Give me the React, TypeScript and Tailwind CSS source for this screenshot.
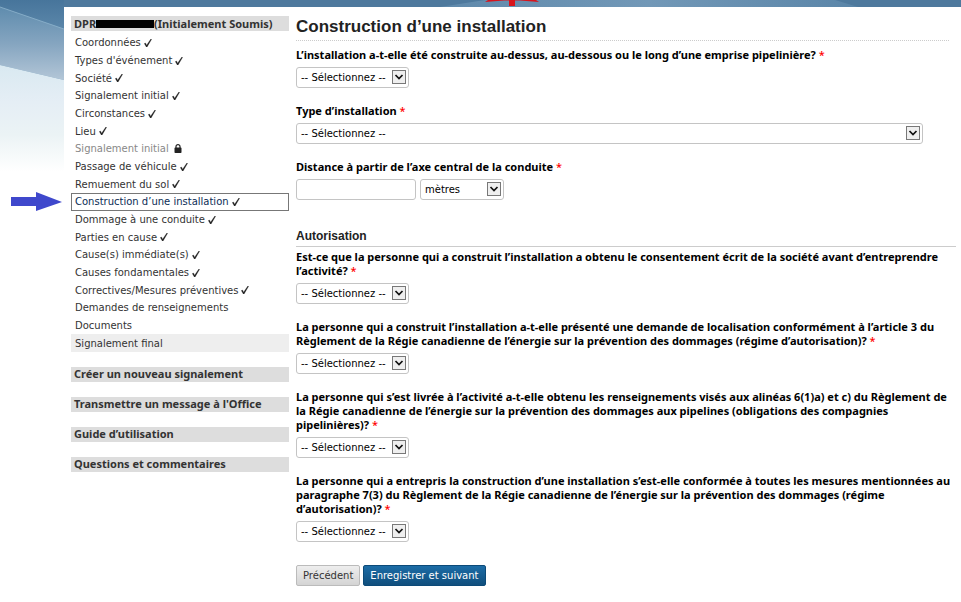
import React from "react";

const steps = [
  { label: "Coordonnées", mark: "check" },
  { label: "Types d'événement", mark: "check" },
  { label: "Société", mark: "check" },
  { label: "Signalement initial", mark: "check" },
  { label: "Circonstances", mark: "check" },
  { label: "Lieu", mark: "check" },
  { label: "Signalement initial", mark: "lock" },
  { label: "Passage de véhicule", mark: "check" },
  { label: "Remuement du sol", mark: "check" },
  { label: "Construction d’une installation", mark: "check", current: true },
  { label: "Dommage à une conduite", mark: "check" },
  { label: "Parties en cause", mark: "check" },
  { label: "Cause(s) immédiate(s)", mark: "check" },
  { label: "Causes fondamentales", mark: "check" },
  { label: "Correctives/Mesures préventives", mark: "check" },
  { label: "Demandes de renseignements", mark: "" },
  { label: "Documents", mark: "" },
  { label: "Signalement final", mark: "", shaded: true },
];

const sections = [
  "Créer un nouveau signalement",
  "Transmettre un message à l'Office",
  "Guide d’utilisation",
  "Questions et commentaires",
];

function Check() {
  return (
    <svg viewBox="0 0 8 8" className="ml-[3px] size-2 shrink-0" aria-hidden="true">
      <path d="M0.3 4.6L1.5 4L2.6 6.2L6.8 0.1L7.6 0.3L3.1 7.9H2.3Z" fill="#222" stroke="#222" strokeWidth="0.3" />
    </svg>
  );
}

function Lock() {
  return (
    <svg viewBox="0 0 8 9" className="ml-[5px] h-[9px] w-2 shrink-0" aria-hidden="true">
      <path d="M2 4V2.6a2 2 0 0 1 4 0V4" fill="none" stroke="#222" strokeWidth="1.2" />
      <rect x="0.5" y="3.6" width="7" height="5.4" rx="0.8" fill="#222" />
    </svg>
  );
}

function Select({ id, width, options, label }: { id: string; width: string; options: string[]; label?: string }) {
  return (
    <div className={`relative ${width}`}>
      <select
        id={id}
        aria-label={label}
        className="block h-[21px] w-full appearance-none rounded-[3px] border border-[#c4c4c4] bg-white pl-1 leading-[14px] text-black"
      >
        {options.map((o) => (
          <option key={o}>{o}</option>
        ))}
      </select>
      <svg viewBox="0 0 14 14" className="pointer-events-none absolute right-[3px] top-[3px] size-[14px]" aria-hidden="true">
        <rect x="0.5" y="0.5" width="13" height="13" fill="#efefef" stroke="#787878" />
        <path d="M3.5 5L7 8.6L10.5 5" fill="none" stroke="#111" strokeWidth="1.7" />
      </svg>
    </div>
  );
}

function Label({ htmlFor, children }: { htmlFor: string; children: React.ReactNode }) {
  return (
    <label
      htmlFor={htmlFor}
      className="mb-[5px] block font-['Noto_Sans',Verdana,sans-serif] text-[11px] font-bold leading-[14px] text-black"
    >
      {children} <span className="font-medium text-[#f00]">*</span>
    </label>
  );
}

const choose = ["-- Sélectionnez --"];

const authorisations = [
  "Est-ce que la personne qui a construit l’installation a obtenu le consentement écrit de la société avant d’entreprendre l’activité?",
  "La personne qui a construit l’installation a-t-elle présenté une demande de localisation conformément à l’article 3 du Règlement de la Régie canadienne de l’énergie sur la prévention des dommages (régime d’autorisation)?",
  "La personne qui s’est livrée à l’activité a-t-elle obtenu les renseignements visés aux alinéas 6(1)a) et c) du Règlement de la Régie canadienne de l’énergie sur la prévention des dommages aux pipelines (obligations des compagnies pipelinières)?",
  "La personne qui a entrepris la construction d’une installation s’est-elle conformée à toutes les mesures mentionnées au paragraphe 7(3) du Règlement de la Régie canadienne de l’énergie sur la prévention des dommages (régime d’autorisation)?",
];

function Backdrop() {
  return (
    <>
      <svg viewBox="0 0 64 172" preserveAspectRatio="none" className="absolute left-0 top-0 h-[172px] w-16" aria-hidden="true">
        <defs>
          <linearGradient id="sky" x1="0" y1="0" x2="0" y2="1">
            <stop offset="0" stopColor="#47759b" />
            <stop offset="0.2" stopColor="#5f8aad" />
          </linearGradient>
          <linearGradient id="beam" x1="0" y1="0" x2="0" y2="1">
            <stop offset="0" stopColor="#5f8cae" />
            <stop offset="0.5" stopColor="#85a5c0" />
            <stop offset="1" stopColor="#b3c6d7" />
          </linearGradient>
          <linearGradient id="snow" x1="0" y1="0" x2="0" y2="1">
            <stop offset="0" stopColor="#d9e9f1" />
            <stop offset="0.35" stopColor="#e5eef5" />
            <stop offset="0.65" stopColor="#ebf3f5" />
            <stop offset="1" stopColor="#ffffff" />
          </linearGradient>
        </defs>
        <rect width="64" height="172" fill="url(#sky)" />
        <path d="M0 7L64 29V80L0 65Z" fill="url(#beam)" />
        <path d="M0 7L64 29" stroke="#8fb5ce" strokeWidth="0.8" />
        <path d="M0 65L64 80V172H0Z" fill="url(#snow)" />
      </svg>
      <svg viewBox="430 0 430 7" className="absolute left-[430px] top-0 h-[7px] w-[430px]" aria-hidden="true">
        <defs>
          <linearGradient id="glow" x1="0" y1="0" x2="1" y2="0">
            <stop offset="0" stopColor="#5f89ab" />
            <stop offset="0.5" stopColor="#7298b7" />
            <stop offset="1" stopColor="#5a85a8" />
          </linearGradient>
        </defs>
        <path d="M440 7L485 0H835L858 7Z" fill="url(#glow)" />
        <path d="M488 0H536L539 2L520 0.6H515V6H509V0.6H504L485 2Z" fill="#d8141c" />
      </svg>
    </>
  );
}

export default function App() {
  return (
    <div className="relative min-h-screen bg-white font-['DejaVu_Sans',Verdana,sans-serif] text-[10px] text-[#333]">
      <div className="h-[7px] bg-[#4e799d]" />
      <Backdrop />
      <svg viewBox="0 0 51 20" className="absolute left-[11px] top-[192px] h-5 w-[51px]" aria-hidden="true">
        <path d="M0 5H25V0L51 10L25 19V14H0Z" fill="#3f48cc" />
      </svg>

      <div className="relative ml-16 flex bg-white pl-[7px]">
        <nav className="w-[218px] shrink-0 pt-[9px]">
          <h2 className="flex h-[15px] items-center bg-[#ddd] pl-[3px] font-['Noto_Sans',Verdana,sans-serif] text-[11px] font-bold leading-[15px]">
            DPR
            <span className="h-2 w-[58px] bg-black" />
            (Initialement Soumis)
          </h2>
          <ul className="mt-[3px] flex h-[318px] flex-col">
            {steps.map((s, i) => (
              <li key={i} className="flex flex-1">
                <a
                  href="#"
                  aria-current={s.current ? "page" : undefined}
                  className={`flex w-full items-center border pl-[3px] leading-[15px] ${
                    s.current ? "border-[#777] text-[#0b2d55]" : s.shaded ? "border-[#eee] bg-[#eee]" : "border-transparent"
                  } ${s.mark === "lock" ? "text-[#888]" : ""}`}
                >
                  {s.label}
                  {s.mark === "check" && <Check />}
                  {s.mark === "lock" && <Lock />}
                </a>
              </li>
            ))}
          </ul>
          <ul className="mt-[15px] flex flex-col gap-[15px] font-['Noto_Sans',Verdana,sans-serif] text-[11px]">
            {sections.map((s) => (
              <li key={s}>
                <a href="#" className="block h-[15px] bg-[#ddd] pl-[3px] font-bold leading-[14px]">
                  {s}
                </a>
              </li>
            ))}
          </ul>
        </nav>

        <main className="ml-[7px] min-w-0 flex-1 pb-4 pr-[5px] pt-[10px]">
          <h1 className="mr-[7px] border-b border-dotted border-[#ccc] pb-[3px] font-['Liberation_Sans',Arial,sans-serif] text-[17px] font-bold leading-5 text-[#222]">
            Construction d’une installation
          </h1>
          <form onSubmit={(e) => e.preventDefault()}>
            <div className="mt-[7px]">
              <Label htmlFor="emprise">
                L’installation a-t-elle été construite au-dessus, au-dessous ou le long d’une emprise pipelinière?
              </Label>
              <Select id="emprise" width="w-[113px]" options={choose} />
            </div>
            <div className="mt-4">
              <Label htmlFor="type">Type d’installation</Label>
              <Select id="type" width="mr-[33px]" options={choose} />
            </div>
            <div className="mt-4">
              <Label htmlFor="distance">Distance à partir de l’axe central de la conduite</Label>
              <div className="flex gap-1">
                <input id="distance" type="text" className="h-[21px] w-[120px] rounded-[3px] border border-[#c4c4c4] px-[5px]" />
                <Select id="unite" label="Unité" width="w-[84px]" options={["mètres", "kilomètres"]} />
              </div>
            </div>

            <h2 className="mt-7 border-b border-[#ccc] pb-[2px] font-['Liberation_Sans',Arial,sans-serif] text-[12px] font-bold leading-4 text-[#222]">
              Autorisation
            </h2>
            <div className="mt-[3px] flex flex-col gap-4">
              {authorisations.map((q, i) => (
                <div key={i}>
                  <Label htmlFor={`autorisation-${i}`}>{q}</Label>
                  <Select id={`autorisation-${i}`} width="w-[113px]" options={choose} />
                </div>
              ))}
            </div>

            <div className="mt-[23px] flex gap-[3px]">
              <button
                type="button"
                className="h-[21px] rounded-[2px] border border-[#bbb] bg-linear-to-b from-[#eee] to-[#d4d4d4] px-[6px] leading-4 text-[#333]"
              >
                Précédent
              </button>
              <button
                type="submit"
                className="h-[21px] rounded-[2px] border border-[#0c4a78] bg-linear-to-b from-[#1c6ca6] to-[#104f7d] px-[6px] leading-4 text-white"
              >
                Enregistrer et suivant
              </button>
            </div>
          </form>
        </main>
      </div>
    </div>
  );
}
